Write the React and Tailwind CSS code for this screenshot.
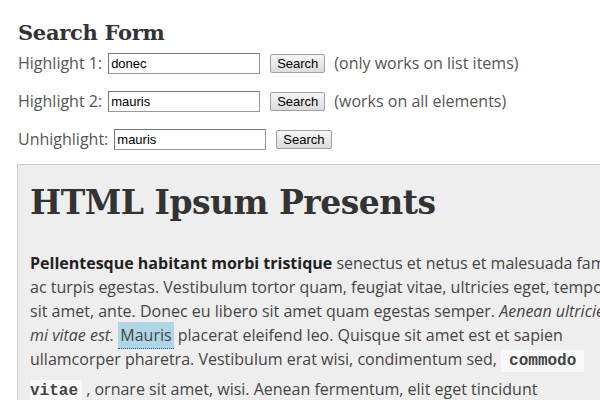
import React from "react";

const rows = [
  { label: "Highlight 1:", value: "donec", note: "(only works on list items)" },
  { label: "Highlight 2:", value: "mauris", note: "(works on all elements)" },
  { label: "Unhighlight:", value: "mauris" },
];

const App = () => {
  return (
    <div className="w-[600px] h-[400px] overflow-hidden bg-white text-[#444] font-['Open_Sans',sans-serif]">
      <div className="pl-[18px] pt-[18px]">
        <h2 className="font-['DejaVu_Serif',serif] font-bold text-[21px] leading-[30px] text-[#333] tracking-[-0.3px]">
          Search Form
        </h2>
        <div className="flex flex-col gap-[14px] mt-[3px]">
          {rows.map((row) => (
            <div key={row.label} className="flex items-center h-[24px] text-[16px] text-[#555]">
              <span>{row.label}</span>
              <input
                readOnly
                value={row.value}
                className="ml-[6px] w-[152px] h-[21px] px-[2px] border border-[#999] border-t-[#777] border-l-[#777] bg-white text-[13px] text-black font-['Liberation_Sans',sans-serif] outline-none"
              />
              <button className="ml-[10px] h-[19px] px-[6px] border border-[#a0a0a0] rounded-[2px] bg-gradient-to-b from-[#f6f6f6] to-[#dcdcdc] text-[13px] leading-[15px] text-black font-['Liberation_Sans',sans-serif]">
                Search
              </button>
              {row.note && <span className="ml-[9px]">{row.note}</span>}
            </div>
          ))}
        </div>
      </div>
      <div className="ml-[17px] mt-[13px] border-t border-l border-[#ccc] bg-[#eeeeee] pl-[12px] pt-[14px] w-[620px] h-[300px]">
        <h1 className="font-['DejaVu_Serif',serif] font-bold text-[33px] leading-[48px] text-[#333] tracking-[-0.5px]">
          HTML Ipsum Presents
        </h1>
        <p className="mt-[24px] text-[16px] leading-[24px] text-[#444] whitespace-nowrap">
          <strong className="font-bold text-[#222]">Pellentesque habitant morbi tristique</strong> senectus et netus et malesuada fames
          <br />
          ac turpis egestas. Vestibulum tortor quam, feugiat vitae, ultricies eget, tempor
          <br />
          sit amet, ante. Donec eu libero sit amet quam egestas semper. <em>Aenean ultricies</em>
          <br />
          <em>mi vitae est.</em>{" "}
          <span className="bg-[#aed6e6] px-[2px] py-[2px] border-b border-dotted border-[#33548a]">Mauris</span>{" "}
          placerat eleifend leo. Quisque sit amet est et sapien
          <br />
          ullamcorper pharetra. Vestibulum erat wisi, condimentum sed,{" "}
          <code className="bg-[#f9f9f9] px-[8px] py-[2px] font-['Liberation_Mono',monospace] text-[16px] font-bold text-[#444]">commodo</code>
          <br />
          <span className="inline-block mt-[4px]">
            <code className="bg-[#f9f9f9] pr-[4px] py-[2px] font-['Liberation_Mono',monospace] text-[16px] font-bold text-[#444]">vitae</code>{" "}
            , ornare sit amet, wisi. Aenean fermentum, elit eget tincidunt
          </span>
        </p>
      </div>
    </div>
  );
};

export default App;
